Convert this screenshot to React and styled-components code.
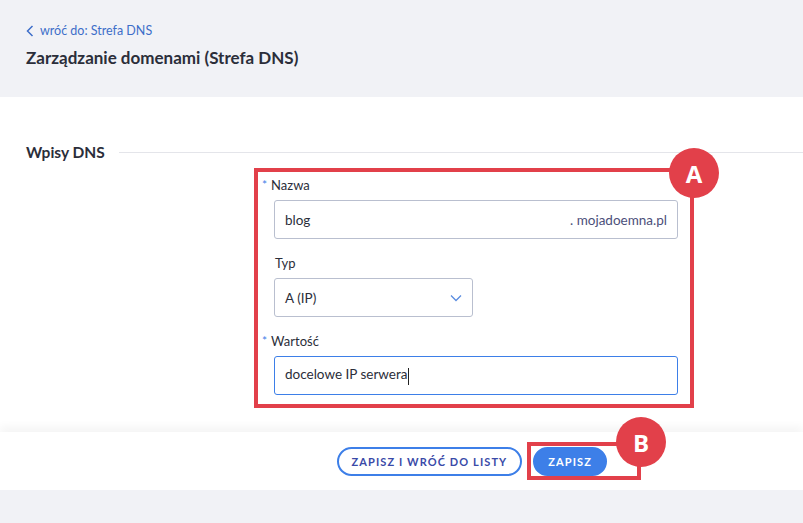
import React from "react";
import styled, { createGlobalStyle } from "styled-components";

const Global = createGlobalStyle`
  html, body { margin: 0; padding: 0; background: #f1f2f6; font-family: Lato, "Noto Sans", sans-serif; }
  * { box-sizing: border-box; }
`;

const Page = styled.div`width: 803px; height: 523px; background: #f1f2f6; display: flex; flex-direction: column;`;
const Header = styled.header`height: 97px; padding: 23px 26px 0; display: flex; flex-direction: column; gap: 9px;`;
const Back = styled.a`color: #3d6ec9; font-size: 12.5px; display: flex; align-items: center; gap: 6px; text-decoration: none;`;
const Title = styled.h1`margin: 0; font-size: 17px; font-weight: 700; color: #2b2e3a;`;
const Main = styled.section`background: #fff; height: 335px; padding: 46px 0 0 26px; position: relative;`;
const SectionHead = styled.div`display: flex; align-items: center; gap: 14px;`;
const SectionTitle = styled.h2`margin: 0; font-size: 15.5px; font-weight: 700; color: #2b2e3a;`;
const Rule = styled.div`flex: 1; height: 1px; background: #e4e5ea;`;
const FormBox = styled.div`
  position: relative; margin: 7px 0 0 228px; width: 440px; height: 240px;
  border: 4px solid #e2404a; padding: 5px 15px 0 4px; display: flex; flex-direction: column;
`;
const Label = styled.label`font-size: 13px; color: #2b2e3a; display: flex; gap: 4px; margin: ${p => p.$mt || 0}px 0 7px ${p => (p.$req ? 0 : 13)}px;`;
const Star = styled.span`color: #3d7fe8; font-size: 12px;`;
const Field = styled.div`
  margin-left: 12px; width: ${p => p.$w}px; height: 39px; border-radius: 3px;
  border: 1px solid ${p => (p.$focus ? "#3d7fe8" : "#b9bfcf")};
  display: flex; align-items: center; justify-content: space-between; padding: 0 10px;
  font-size: 13.5px; color: #2b2e3a;
`;
const Suffix = styled.span`color: #4c4f7a;`;
const Caret = styled.span`display: inline-block; width: 1px; height: 17px; background: #222; vertical-align: middle;`;
const Badge = styled.div`
  position: absolute; width: 50px; height: 50px; border-radius: 50%; background: #e2404a;
  color: #fff; font-weight: 700; font-size: 24px; display: flex; align-items: center; justify-content: center;
  font-family: "Open Sans", sans-serif; top: ${p => p.$t}px; right: ${p => p.$r}px;
`;
const Footer = styled.footer`
  margin-top: 0; height: 58px; background: #fff; box-shadow: 0 -6px 8px rgba(0,0,0,0.04);
  display: flex; align-items: center; justify-content: flex-end; padding-right: 162px; gap: 9px; z-index: 1;
`;
const Btn = styled.button`
  height: 29px; border-radius: 15px; font-family: inherit; font-size: 11px; font-weight: 700; letter-spacing: 1.1px;
  padding: 0 13px; border: 2px solid #3d7fe8; cursor: pointer;
  background: ${p => (p.$primary ? "#3d7fe8" : "#fff")}; color: ${p => (p.$primary ? "#fff" : "#3a4aa8")};
`;
const Highlight = styled.div`position: relative; border: 4px solid #e2404a; padding: 1px 30px 0 2px; margin-left: -4px;`;

export default function App() {
  return (
    <Page>
      <Global />
      <Header>
        <Back href="#">
          <svg width="8" height="12" viewBox="0 0 8 12"><path d="M6.5 1 1.5 6l5 5" fill="none" stroke="#3d6ec9" strokeWidth="1.5" /></svg>
          wróć do: Strefa DNS
        </Back>
        <Title>Zarządzanie domenami (Strefa DNS)</Title>
      </Header>
      <Main>
        <SectionHead><SectionTitle>Wpisy DNS</SectionTitle><Rule /></SectionHead>
        <FormBox>
          <Badge $t={-24} $r={-29}>A</Badge>
          <Label $req><Star>*</Star>Nazwa</Label>
          <Field $w={404}><span>blog</span><Suffix>. mojadoemna.pl</Suffix></Field>
          <Label $mt={16}>Typ</Label>
          <Field $w={199}>
            <span>A (IP)</span>
            <svg width="12" height="8" viewBox="0 0 12 8"><path d="M1 1.5 6 6.5l5-5" fill="none" stroke="#5b8de0" strokeWidth="1.3" /></svg>
          </Field>
          <Label $req $mt={16}><Star>*</Star>Wartość</Label>
          <Field $w={404} $focus><span>docelowe IP serwera<Caret /></span></Field>
        </FormBox>
      </Main>
      <Footer>
        <Btn>ZAPISZ I WRÓĆ DO LISTY</Btn>
        <Highlight>
          <Btn $primary>ZAPISZ</Btn>
          <Badge $t={-29} $r={-29}>B</Badge>
        </Highlight>
      </Footer>
    </Page>
  );
}
